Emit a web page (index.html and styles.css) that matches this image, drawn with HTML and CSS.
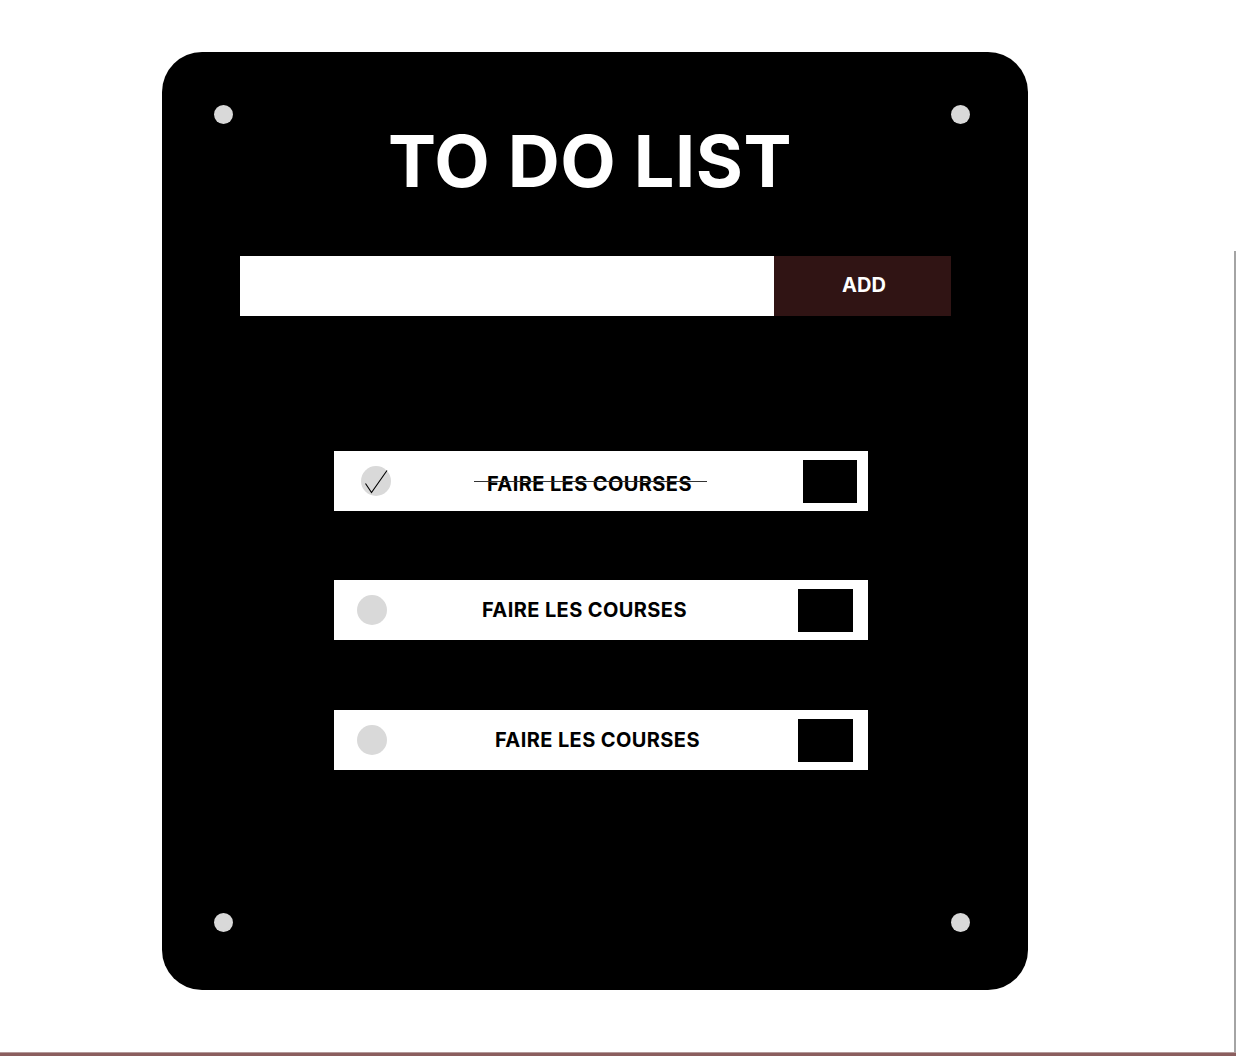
FILE: index.html
```html
<!DOCTYPE html>
<html lang="fr">
<head>
<meta charset="utf-8">
<title>To Do List</title>
<link rel="stylesheet" href="styles.css">
</head>
<body>
<div class="page">
  <main class="stage">
    <section class="card">
      <span class="screw screw-tl"></span>
      <span class="screw screw-tr"></span>
      <span class="screw screw-bl"></span>
      <span class="screw screw-br"></span>

      <h1 class="title">TO DO LIST</h1>

      <form class="entry">
        <input class="entry-input" type="text" aria-label="Nouvelle tâche">
        <button class="entry-add" type="button">ADD</button>
      </form>

      <ul class="tasks">
        <li class="task task-done">
          <span class="task-check">
            <svg width="30" height="30" viewBox="0 0 30 30" aria-hidden="true">
              <path d="M4.5 17.5 L10.5 26.5 L26 4.5" fill="none" stroke="#000" stroke-width="1.1" stroke-linejoin="miter"/>
            </svg>
          </span>
          <span class="task-label">FAIRE LES COURSES</span>
          <span class="task-delete"></span>
        </li>
        <li class="task task-mid">
          <span class="task-check"></span>
          <span class="task-label">FAIRE LES COURSES</span>
          <span class="task-delete"></span>
        </li>
        <li class="task task-last">
          <span class="task-check"></span>
          <span class="task-label">FAIRE LES COURSES</span>
          <span class="task-delete"></span>
        </li>
      </ul>
    </section>
  </main>
  <div class="edge"></div>
</div>
<div class="footer-bar"></div>
</body>
</html>
```

FILE: styles.css
```css
* { box-sizing: border-box; }

html, body {
  margin: 0;
  padding: 0;
  background: #ffffff;
  font-family: "Inter", "Liberation Sans", sans-serif;
}

.page {
  display: flex;
  height: 1052px;
}

.stage {
  flex: 1;
  padding: 52px 0 0 162px;
}

.edge {
  width: 2px;
  margin-top: 251px;
  background: #a4a4a4;
}

.footer-bar {
  height: 4px;
  background: #8b5e5e;
  border-top: 1px solid #b49a9a;
}

.card {
  position: relative;
  width: 866px;
  height: 938px;
  background: #000000;
  border-radius: 40px;
  padding-top: 73px;
}

.screw {
  position: absolute;
  width: 19px;
  height: 19px;
  border-radius: 50%;
  background: #d9d9d9;
}
.screw-tl { left: 52px; top: 53px; }
.screw-tr { left: 789px; top: 53px; }
.screw-bl { left: 52px; top: 861px; }
.screw-br { left: 789px; top: 861px; }

.title {
  margin: 0;
  text-align: center;
  color: #ffffff;
  font-size: 72px;
  line-height: 72px;
  font-weight: 700;
  letter-spacing: 0.5px;
  padding-right: 10px;
}

.entry {
  display: flex;
  margin: 59px 0 0 78px;
  width: 711px;
  height: 60px;
}

.entry-input {
  width: 534px;
  height: 60px;
  border: none;
  outline: none;
  margin: 0;
  padding: 0 16px;
  background: #ffffff;
  font: inherit;
}

.entry-add {
  flex: 1;
  height: 60px;
  border: none;
  margin: 0;
  background: #301414;
  color: #ffffff;
  font-family: "Inter", "Liberation Sans", sans-serif;
  font-size: 20px;
  font-weight: 700;
  padding: 0 0 2px 3px;
}

.tasks {
  list-style: none;
  margin: 135px 0 0 172px;
  padding: 0;
  width: 534px;
  display: flex;
  flex-direction: column;
  gap: 69px;
}

.task {
  display: flex;
  align-items: center;
  height: 60px;
  background: #ffffff;
  padding: 0 15px 0 23px;
}

.task-check {
  flex: none;
  width: 30px;
  height: 30px;
  border-radius: 50%;
  background: #d9d9d9;
}
.task-check svg { display: block; }

.task-label {
  position: relative;
  color: #000000;
  font-size: 20px;
  font-weight: 700;
  line-height: 24px;
  letter-spacing: 0.4px;
  white-space: nowrap;
}

.task-delete {
  flex: none;
  margin-left: auto;
  width: 55px;
  height: 43px;
  background: #000000;
}

/* done task */
.task-done { padding-left: 27px; padding-right: 11px; }
.task-done .task-label { margin-left: 96px; margin-top: 6px; }
.task-done .task-label::after {
  content: "";
  position: absolute;
  left: -13px;
  right: -15px;
  top: 9px;
  height: 1px;
  background: #333333;
}
.task-done .task-delete { width: 54px; }

.task-mid .task-label { margin-left: 95px; }
.task-last { margin-top: 1px; }
.task-last .task-label { margin-left: 108px; }
```
